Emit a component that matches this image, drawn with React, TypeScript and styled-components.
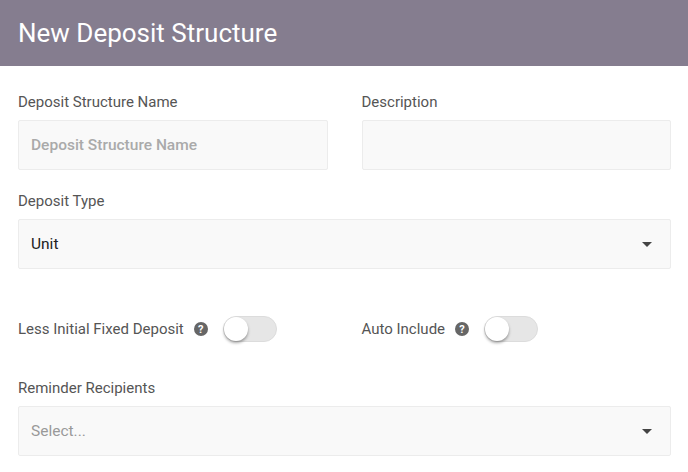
import styled, { createGlobalStyle } from 'styled-components';

const Global = createGlobalStyle`
  body { margin: 0; font-family: Roboto, "Liberation Sans", sans-serif; background: #fff; }
`;

const Header = styled.div`
  height: 66px;
  background: #857d8f;
  display: flex;
  align-items: center;
  padding: 0 18px;
  box-sizing: border-box;
  color: #fff;
  font-size: 26px;
`;

const Body = styled.div`
  padding: 26px 17px 0 18px;
`;

const Grid = styled.div`
  display: grid;
  grid-template-columns: 1fr 1fr;
  column-gap: 34px;
`;

const Field = styled.div<{ $mt?: number }>`
  display: flex;
  flex-direction: column;
  margin-top: ${p => p.$mt ?? 0}px;
`;

const Label = styled.div`
  font-size: 15px;
  color: #555;
  height: 20px;
  line-height: 20px;
  margin-bottom: 8px;
`;

const Box = styled.div<{ $muted?: boolean }>`
  height: 50px;
  box-sizing: border-box;
  background: #f9f9f9;
  border: 1px solid #ececec;
  border-radius: 2px;
  display: flex;
  align-items: center;
  padding: 0 12px;
  font-size: 15.5px;
  color: ${p => (p.$muted ? '#aaa' : '#222')};
  font-weight: ${p => (p.$muted ? 500 : 400)};
`;

const Caret = styled.div`
  margin-left: auto;
  margin-right: 6px;
  width: 0;
  height: 0;
  border-left: 5px solid transparent;
  border-right: 5px solid transparent;
  border-top: 5px solid #444;
`;

const ToggleRow = styled.div`
  display: flex;
  align-items: center;
  height: 26px;
  margin-top: 47px;
`;

const ToggleLabel = styled.span`
  font-size: 15px;
  color: #555;
`;

const Help = styled.span`
  width: 14px;
  height: 14px;
  border-radius: 50%;
  background: #666;
  color: #fff;
  font-size: 11px;
  font-weight: 700;
  display: inline-flex;
  align-items: center;
  justify-content: center;
  margin: 0 15px 0 10px;
`;

const Track = styled.div`
  width: 54px;
  height: 26px;
  border-radius: 13px;
  background: #e6e6e6;
  border: 1px solid #dcdcdc;
  box-sizing: border-box;
  position: relative;
`;

const Knob = styled.div`
  position: absolute;
  left: 0;
  top: 0;
  width: 24px;
  height: 24px;
  border-radius: 50%;
  background: #fff;
  box-shadow: 0 2px 3px rgba(0, 0, 0, 0.35);
`;

const Toggle = ({ label }: { label: string }) => (
  <ToggleRow>
    <ToggleLabel>{label}</ToggleLabel>
    <Help>?</Help>
    <Track><Knob /></Track>
  </ToggleRow>
);

export default function App() {
  return (
    <>
      <Global />
      <Header>New Deposit Structure</Header>
      <Body>
        <Grid>
          <Field>
            <Label>Deposit Structure Name</Label>
            <Box $muted>Deposit Structure Name</Box>
          </Field>
          <Field>
            <Label>Description</Label>
            <Box />
          </Field>
        </Grid>
        <Field $mt={21}>
          <Label>Deposit Type</Label>
          <Box>Unit<Caret /></Box>
        </Field>
        <Grid>
          <Toggle label="Less Initial Fixed Deposit" />
          <Toggle label="Auto Include" />
        </Grid>
        <Field $mt={36}>
          <Label>Reminder Recipients</Label>
          <Box style={{ color: '#999', fontWeight: 400 }}>Select...<Caret /></Box>
        </Field>
      </Body>
    </>
  );
}
